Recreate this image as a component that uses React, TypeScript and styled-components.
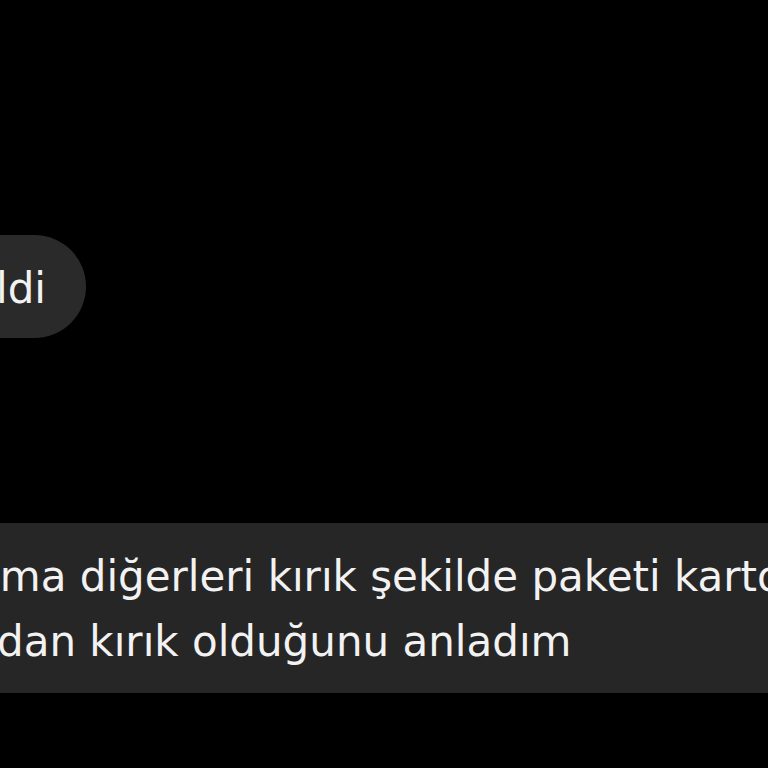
import React from "react";
import styled, { createGlobalStyle } from "styled-components";

const Global = createGlobalStyle`
  html, body { margin: 0; padding: 0; background: #000; }
  body { font-family: "DejaVu Sans", "Noto Sans", sans-serif; }
`;

const Screen = styled.div`
  width: 768px;
  height: 768px;
  background: #000;
  overflow: hidden;
  display: flex;
  flex-direction: column;
  padding-top: 235px;
  box-sizing: border-box;
`;

const Bubble = styled.div`
  align-self: flex-start;
  box-sizing: border-box;
  height: 103px;
  padding: 4px 40px 0 60px;
  line-height: 99px;
  margin-left: -64px;
  border-radius: 52px;
  background: #2a2a2a;
  color: #f2f2f2;
  font-size: 42px;
  white-space: nowrap;
`;

const Panel = styled.div`
  margin-top: 185px;
  background: #262626;
  padding: 21px 0 19px;
  overflow: hidden;
`;

const Line = styled.div<{ $shift: number }>`
  height: 65px;
  line-height: 65px;
  font-size: 42px;
  color: #f2f2f2;
  white-space: nowrap;
  margin-left: ${(p) => p.$shift}px;
`;

export default function App() {
  return (
    <>
      <Global />
      <Screen>
        <Bubble>ldi</Bubble>
        <Panel>
          <Line $shift={-26}>ama diğerleri kırık şekilde paketi kartonundan</Line>
          <Line $shift={-3}>dan kırık olduğunu anladım</Line>
        </Panel>
      </Screen>
    </>
  );
}
